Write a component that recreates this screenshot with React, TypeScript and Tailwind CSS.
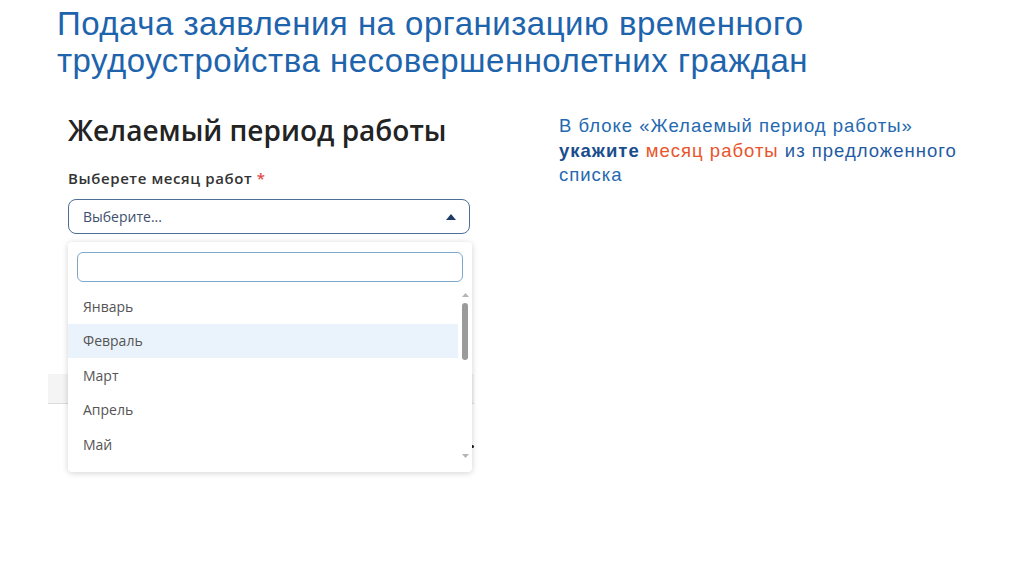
import React from 'react';

const months = ['Январь', 'Февраль', 'Март', 'Апрель', 'Май'];

function MonthSelect() {
  return (
    <div className="w-[463px] pl-[20px]" style={{ fontFamily: '"Open Sans", "Noto Sans", sans-serif' }}>
      <h2 className="text-[28px] leading-[32px] font-semibold text-[#232323]">Желаемый период работы</h2>
      <div className="mt-[23px] text-[15px] leading-[18px] font-semibold text-[#333] tracking-[0.6px]">
        Выберете месяц работ <span className="text-[#e24a4a]">*</span>
      </div>
      <div className="mt-[12px] w-[402px] h-[35px] rounded-[8px] border-[1.5px] border-[#4d6f97] flex items-center justify-between pl-[14px] pr-[13px]">
        <span className="text-[14px] text-[#3d4f6d] font-medium">Выберите...</span>
        <svg width="10" height="6" viewBox="0 0 10 6">
          <path d="M0 6 L5 0 L10 6 Z" fill="#1f3b67" />
        </svg>
      </div>

      <div className="relative mt-[8px]">
        {/* row of the form hidden behind the open list */}
        <div className="absolute left-[-20px] top-[132px] w-[426px] h-[30px] bg-[#f4f4f5] border-b border-[#dcdcdc]" />
        <div className="absolute left-[403px] top-[203px] w-[3px] h-[3px] rounded-full bg-[#111]" />

        <div className="relative w-[404px] bg-white rounded-[4px] shadow-[0_1px_6px_rgba(0,0,0,0.18)] pt-[10px] pb-[10px]">
          <div className="mx-[9px] h-[30px] rounded-[6px] border-[1.5px] border-[#7ea7cc]" />
          <div className="flex mt-[7px]">
            <div className="flex-1">
              {months.map((m, i) => (
                <div
                  key={m}
                  className={`h-[34.5px] flex items-center pl-[15px] text-[14px] font-medium text-[#555] ${i === 1 ? 'bg-[#eaf3fb]' : ''}`}
                >
                  {m}
                </div>
              ))}
            </div>
            <div className="w-[14px] flex flex-col items-center pt-[4px] pb-[4px]">
              <svg width="7" height="4" viewBox="0 0 7 4">
                <path d="M0 4 L3.5 0 L7 4 Z" fill="#b5b5b5" />
              </svg>
              <div className="mt-[6px] w-[6px] h-[57px] rounded-full bg-[#9b9b9b]" />
              <div className="flex-1" />
              <svg width="7" height="4" viewBox="0 0 7 4">
                <path d="M0 0 L3.5 4 L7 0 Z" fill="#b5b5b5" />
              </svg>
            </div>
          </div>
        </div>
      </div>
    </div>
  );
}

export default function App() {
  return (
    <div className="w-[1024px] h-[574px] bg-white overflow-hidden" style={{ fontFamily: '"Liberation Sans", Arial, sans-serif' }}>
      <h1 className="pl-[57px] pt-[5px] text-[33px] leading-[37px] tracking-[0.5px] text-[#1e64ad]">
        Подача заявления на организацию временного
        <br />
        трудоустройства несовершеннолетних граждан
      </h1>
      <div className="flex mt-[35px] pl-[48px]">
        <MonthSelect />
        <div className="ml-[48px] text-[18.5px] leading-[24.5px] tracking-[1px] text-[#2569b1]">
          <div>В блоке «Желаемый период работы»</div>
          <div>
            <span className="font-bold text-[#1a4d8c]">укажите</span>{' '}
            <span className="text-[#e9552b]">месяц работы</span>{' '}
            <span className="text-[#1f5ba3]">из предложенного</span>
          </div>
          <div>списка</div>
        </div>
      </div>
    </div>
  );
}
